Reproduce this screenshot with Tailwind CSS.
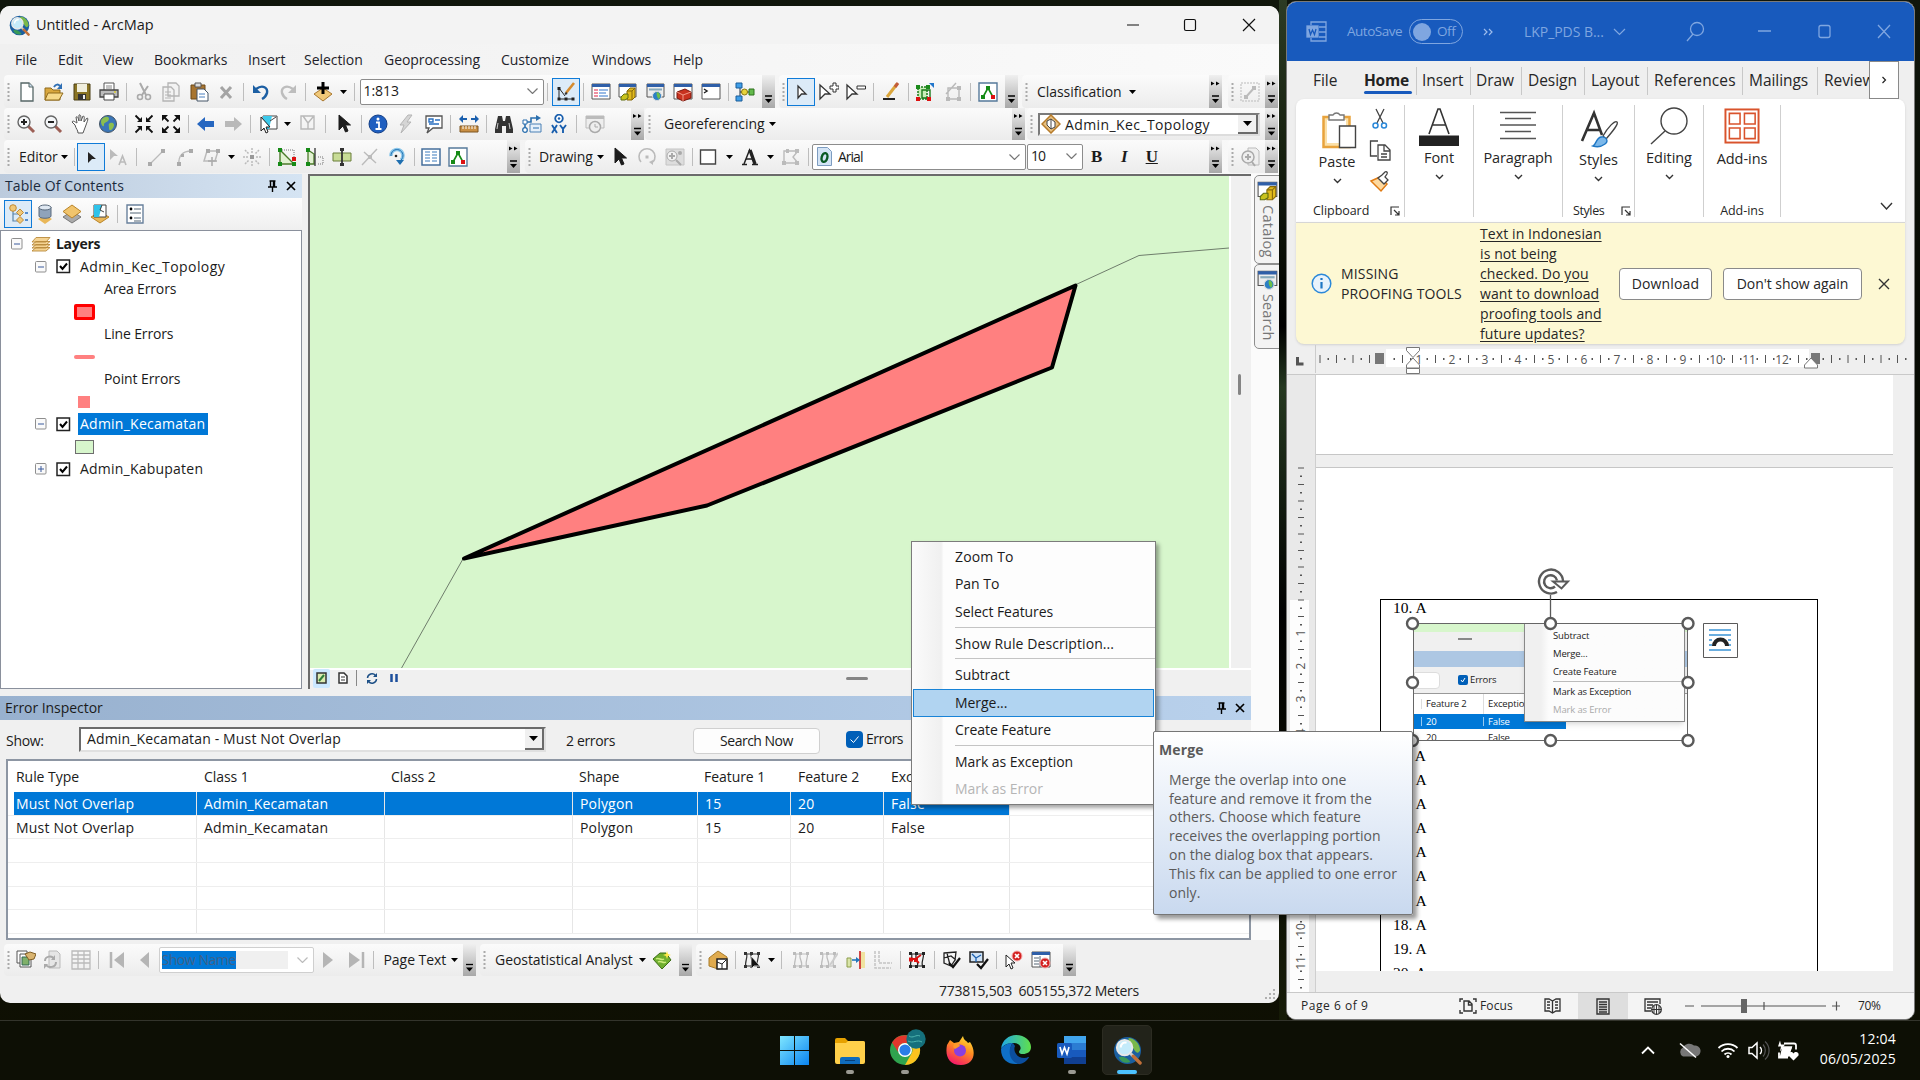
<!DOCTYPE html>
<html lang="en">
<head>
<meta charset="utf-8">
<title>Untitled - ArcMap</title>
<script src="https://cdn.jsdelivr.net/npm/@tailwindcss/browser@4"></script>
</head>
<body class="relative h-[1080px] w-[1920px] overflow-hidden bg-[#0c0f05] font-['Open_Sans','Noto_Sans',sans-serif] text-[14px] leading-none tracking-[-0.05px] text-[#1b1b1b]">

<!-- desktop wallpaper -->
<div class="absolute inset-0 bg-[linear-gradient(180deg,#10160c_0%,#070a03_30%,#0d0f04_60%,#0f1003_100%)]"></div>
<div class="absolute left-[1279px] top-0 h-[1020px] w-2 bg-[linear-gradient(180deg,#2c3b24,#16200f_15%,#000_32%,#253820_38%,#000_60%,#161b07)]"></div>

<!-- ArcMap window -->
<main class="absolute left-0 top-[6px] flex h-[997px] w-[1279px] flex-col overflow-hidden rounded-[10px] bg-[#f0f0f0]">
  <header class="flex h-[38px] shrink-0 items-center bg-[#f3f3f3] pl-[9px] pr-[3px]">
    <svg class="size-[21px]" viewBox="0 0 30 30"><use href="#arcglobe"/></svg>
    <span class="ml-[6px] grow text-[14.5px]">Untitled - ArcMap</span>
    <svg class="h-[16px] w-[150px]" viewBox="0 0 150 16" fill="none" stroke="#111" stroke-width="1.2"><path d="M1 8h12"/><rect x="58.500" y="2.500" width="11" height="11" rx="1.500"/><path d="M117 2l12 12M129 2l-12 12"/></svg>
  </header>
  <nav class="flex h-[31px] shrink-0 items-center bg-gradient-to-r from-[#f0f0f0] to-[#fafafa] pl-[15px] text-[#1e1e2a]">
    <span class="w-[43px]">File</span><span class="w-[45px]">Edit</span><span class="w-[51px]">View</span><span class="w-[94px]">Bookmarks</span><span class="w-[56px]">Insert</span><span class="w-[80px]">Selection</span><span class="w-[117px]">Geoprocessing</span><span class="w-[91px]">Customize</span><span class="w-[81px]">Windows</span><span>Help</span>
  </nav>
  <div class="flex h-[99px] shrink-0 flex-col bg-gradient-to-r from-[#f0f0f0] to-[#f8f8f8] pl-1">
    <div class="flex h-[33px]">
      <div data-tools=": new open save print | cut copy paste del | undo redo | add v | _2 #scale | _1.5 *edit | toc catalog search toolbox python | model ~ o" class="flex w-[771px] items-center rounded bg-gradient-to-b from-[#fbfbfb] to-[#ececec]"></div>
      <div data-tools=": _-1 *arrowo arrowp arrowm | pencil | topoext sketch | _1 topo ~ o" class="ml-1 flex w-[239px] items-center rounded bg-gradient-to-b from-[#fbfbfb] to-[#ececec]"></div>
      <div data-tools=": _6 t:Classification:88 v ~ O" class="ml-1 flex w-[200px] items-center rounded bg-gradient-to-b from-[#fbfbfb] to-[#ececec]"></div>
      <div data-tools=": _-1 linebox ~ O" class="ml-[6px] flex w-[50px] items-center rounded bg-gradient-to-b from-[#fbfbfb] to-[#ececec]"></div>
    </div>
    <div class="flex h-[32px]">
      <div data-tools=": _-1 zoomin zoomout pan globe | _1 fixin fixout | back fwd | _1 selfeat _-2 v clear | _1 arrow | info bolt popup | _1 measure | _1 binoc route xy | _1 time ~ O" class="flex w-[640px] items-center rounded bg-gradient-to-b from-[#fbfbfb] to-[#ececec]"></div>
      <div data-tools=": _10 t:Georeferencing:101 v ~ O" class="ml-px flex w-[380px] items-center rounded bg-gradient-to-b from-[#fbfbfb] to-[#ececec]"></div>
      <div data-tools=": _2 #topology ~ O" class="ml-[2px] flex w-[251px] items-center rounded bg-gradient-to-b from-[#fbfbfb] to-[#ececec]"></div>
    </div>
    <div class="flex h-[33px]">
      <div data-tools=": _6 t:Editor:38 v | _-1 *arrowd arrowa | _4 seg arc trace _-2 v point | _1 e1 e2 e3 split rotate | _-1 attr topo ~ O" class="flex w-[516px] items-center rounded bg-gradient-to-b from-[#fbfbfb] to-[#ececec]"></div>
      <div data-tools=": _5 t:Drawing:54 v _-1 arrow rot zoomel | _-1 rect v letter v nodes | #font #size b:B b:I b:U ~ O" class="ml-[5px] flex w-[697px] items-center rounded bg-gradient-to-b from-[#fbfbfb] to-[#ececec]"></div>
      <div data-tools=": _-1 pagezoom ~ O" class="ml-[6px] flex w-[50px] items-center rounded bg-gradient-to-b from-[#fbfbfb] to-[#ececec]"></div>
    </div>
  </div>

  <div class="flex h-[766px] shrink-0">
    <div class="flex w-[1251px] flex-col">
      <div class="flex h-[522px] shrink-0">
        <!-- table of contents -->
        <section class="flex w-[302px] flex-col">
          <div class="flex h-[24px] items-center bg-gradient-to-r from-[#bccbdd] to-[#d5e4f3] pl-[5px] pr-[2px]">
            <span class="grow tracking-[0.1px] text-[#1b2a3c]">Table Of Contents</span>
            <svg class="h-4 w-[36px]" viewBox="0 0 36 16"><use href="#pinx"/></svg>
          </div>
          <div data-tools="_4 *tocdraw _-1 tocsrc tocvis tocsel | _1 tocopt" class="flex h-[32px] items-center bg-gradient-to-b from-[#fdfdfd] to-[#efefef]"></div>
          <div class="flex h-[459px] flex-col border border-[#8a909c] bg-white pt-[2px]">
            <div class="flex h-[22.5px] items-center pl-[10px]"><svg class="size-3" viewBox="0 0 12 12"><use href="#minus"/></svg><svg class="ml-[7px] h-[17px] w-[22px]" viewBox="0 0 22 17"><path d="M2 15l4-3.500h14L16 15zM2 12l4-3.500h14L16 12zM2 9l4-3.500h14L16 9zM2 6l4-4.500h14L16 6z" fill="#f5d392" stroke="#b98a3c" stroke-width=".9"/></svg><b class="ml-[4px] text-[14px] tracking-[-0.3px]">Layers</b></div>
            <div class="flex h-[22.5px] items-center pl-[34px]"><svg class="size-3" viewBox="0 0 12 12"><use href="#minus"/></svg><svg class="ml-[9px] size-[15px]" viewBox="0 0 15 15"><use href="#check"/></svg><span class="ml-[9px] tracking-[0.42px]">Admin_Kec_Topology</span></div>
            <div class="flex h-[22.5px] items-center pl-[103px] tracking-[-0.15px]">Area Errors</div>
            <div class="flex h-[22.5px] items-center pl-[73px]"><i class="h-[16px] w-[21px] rounded-[2px] border-[3px] border-[#f00] bg-[#ff8080]"></i></div>
            <div class="flex h-[22.5px] items-center pl-[103px] tracking-[-0.15px]">Line Errors</div>
            <div class="flex h-[22.5px] items-center pl-[73px]"><i class="h-[4px] w-[21px] rounded bg-[#ff8080]"></i></div>
            <div class="flex h-[22.5px] items-center pl-[103px] tracking-[-0.1px]">Point Errors</div>
            <div class="flex h-[22.5px] items-center pl-[77px]"><i class="size-[12px] bg-[#ff8080]"></i></div>
            <div class="flex h-[22.5px] items-center pl-[34px]"><svg class="size-3" viewBox="0 0 12 12"><use href="#minus"/></svg><svg class="ml-[9px] size-[15px]" viewBox="0 0 15 15"><use href="#check"/></svg><span class="ml-[7px] flex h-[22px] w-[130px] items-center bg-[#0078d7] pl-[2px] tracking-[0.24px] text-white">Admin_Kecamatan</span></div>
            <div class="flex h-[22.5px] items-center pl-[74px]"><i class="h-[14px] w-[19px] border border-[#6e6e6e] bg-[#d7f6cc]"></i></div>
            <div class="flex h-[22.5px] items-center pl-[34px]"><svg class="size-3" viewBox="0 0 12 12"><use href="#plus"/></svg><svg class="ml-[9px] size-[15px]" viewBox="0 0 15 15"><use href="#check"/></svg><span class="ml-[9px] tracking-[0.22px]">Admin_Kabupaten</span></div>
          </div>
        </section>
        <!-- map view -->
        <section class="ml-[6px] h-[515px] w-[943px] border-l-2 border-t-2 border-[#6b6b6b]">
          <div class="flex h-[492px]">
            <svg class="h-[492px] w-[919px] bg-[#d7f6cc]" viewBox="310 176 919 492" fill="none">
              <path d="M463.500 558L401 669M1075 285l64-29.500L1229 248" stroke="#6f7d6c" stroke-width="1"/>
              <path d="M1075.500 285.500L1052 367.500L707 505.500L464 558.500Z" fill="#ff8080" stroke="#000" stroke-width="4" stroke-linejoin="round"/>
            </svg>
            <div class="flex w-[22px] border-l-2 border-white pl-[7px] pt-[198px]"><i class="h-[21px] w-[3px] rounded bg-[#858585]"></i></div>
          </div>
          <div class="flex h-[21px] items-center border-t-2 border-white pb-[3px] pl-[3px]">
            <svg class="h-[19px] w-[100px]" viewBox="0 0 100 19"><rect width="17" height="19" rx="2" fill="#cce8ff"/><rect x="4" y="4" width="9" height="10" fill="#dcebb0" stroke="#333" stroke-width="1.500"/><path d="M6 12l5-6" stroke="#2f7f3a" stroke-width="2"/><path d="M26 4h5l3 3v7h-8z" fill="#fff" stroke="#333" stroke-width="1.500"/><path d="M28 8h4M28 11h4" stroke="#333"/><path d="M43.500 1v16" stroke="#888"/><path d="M54.500 9a4.500 4.500 0 0 1 8-2.500M63.500 10a4.500 4.500 0 0 1-8 2.500" fill="none" stroke="#1c4f86" stroke-width="1.500"/><path d="M64 4v4h-4zM54 15v-4h4z" fill="#1c4f86"/><path d="M78.500 5v8M83.500 5v8" stroke="#1c4f9c" stroke-width="2.500"/></svg>
            <i class="ml-[433px] h-[3px] w-[22px] rounded bg-[#858585]"></i>
          </div>
        </section>
      </div>
      <!-- error inspector -->
      <section class="flex h-[244px] flex-col">
        <div class="flex h-[24px] shrink-0 items-center bg-gradient-to-r from-[#98b1cf] to-[#b9d1ec] pl-[5px] pr-[2px]">
          <span class="grow">Error Inspector</span>
          <svg class="h-4 w-[36px]" viewBox="0 0 36 16"><use href="#pinx"/></svg>
        </div>
        <div class="flex h-[39px] shrink-0 items-center pl-[6px] pt-[3px]">
          <span class="w-[73px] tracking-[-0.3px]">Show:</span>
          <span class="-mt-[4px] flex h-[25px] w-[467px] items-center border-2 border-[#6b6b6b] border-b-[#e0e0e0] border-r-[#e0e0e0] bg-white pl-[6px]"><span class="grow tracking-[0.15px]">Admin_Kecamatan - Must Not Overlap</span><span class="flex h-full w-[19px] items-center justify-center border-b-2 border-r-2 border-[#6b6b6b] bg-[#f0f0f0]"><svg class="h-[5px] w-[9px]" viewBox="0 0 9 5"><path d="M0 0h9L4.500 5z"/></svg></span></span>
          <span class="ml-[20px] w-[127px] tracking-[-0.35px]">2 errors</span>
          <span class="flex h-[26px] w-[127px] items-center justify-center rounded border border-[#d0d0d0] bg-[#fdfdfd] tracking-[-0.5px]">Search Now</span>
          <svg class="-mt-[4px] ml-[26px] size-[17px]" viewBox="0 0 17 17"><rect width="17" height="17" rx="4" fill="#005fb8"/><path d="M4.500 8.500l3 3 5-6" fill="none" stroke="#fff"/></svg>
          <span class="-mt-[4px] ml-[3px] tracking-[-0.5px]">Errors</span>
        </div>
        <div class="ml-[6px] h-[181px] w-[1245px] shrink-0 overflow-hidden border-2 border-[#8d96a3] bg-white">
          <div class="flex h-[31px] items-center pl-[8px]">
            <span class="w-[188px]">Rule Type</span><span class="w-[187px]">Class 1</span><span class="w-[188px]">Class 2</span><span class="w-[125px]">Shape</span><span class="w-[94px]">Feature 1</span><span class="w-[93px]">Feature 2</span><span>Exception</span>
          </div>
          <div id="rows" class="tracking-[0.18px]"></div>
        </div>
      </section>
    </div>
    <!-- docked tabs -->
    <aside class="flex w-[28px] flex-col bg-[#fbfbfb] pl-[3px] pt-[1px]">
      <div class="flex h-[89px] w-[27px] flex-col items-center rounded-l-[5px] border border-[#8e8e8e] bg-[#f3f3f3] pt-[4px]"><svg class="size-[22px]" viewBox="0 0 20 20"><use href="#catalog"/></svg><span class="mt-[3px] text-[14.5px] tracking-[0.3px] text-[#777] [writing-mode:vertical-rl]">Catalog</span></div>
      <div class="flex h-[85px] w-[27px] flex-col items-center rounded-l-[5px] border border-[#8e8e8e] bg-[#f3f3f3] pt-[4px]"><svg class="size-[22px]" viewBox="0 0 20 20"><use href="#search"/></svg><span class="mt-[3px] text-[14.5px] tracking-[0.1px] text-[#777] [writing-mode:vertical-rl]">Search</span></div>
    </aside>
  </div>
  <div class="flex h-[38px] shrink-0 items-center pl-1 pt-[2px]">
    <div data-tools=": _-1 ddp refresh grid | _2 first prev #showname _1 next last | _7 t:Page_Text:64 v ~ o" class="flex h-[32px] w-[472px] items-center rounded bg-gradient-to-b from-[#fbfbfb] to-[#ececec]"></div>
    <div data-tools=": _6 t:Geostatistical_Analyst:140 v _-1 geo ~ o" class="ml-[4px] flex h-[32px] w-[212px] items-center rounded bg-gradient-to-b from-[#fbfbfb] to-[#ececec]"></div>
    <div data-tools=": _-1 valid | seltopo _-2 v | _2 n1 n2 align n3 | _-1 fix | val1 val2 | errsel errwin ~ o" class="ml-[4px] flex h-[32px] w-[380px] items-center rounded bg-gradient-to-b from-[#fbfbfb] to-[#ececec]"></div>
  </div>
  <footer class="flex h-[25px] items-center pl-[939px] text-[#222]"><span class="w-[320px] whitespace-pre tracking-[-0.28px]">773815,503  605155,372 Meters</span><svg class="mt-[7px] ml-[4px] size-[15px]" viewBox="0 0 15 15" fill="#b0b0b0"><path d="M10 2h2v2h-2zM10 6h2v2h-2zM10 10h2v2h-2zM6 6h2v2H6zM6 10h2v2H6zM2 10h2v2H2z"/></svg></footer>
</main>

<!-- Word window -->
<article class="absolute left-[1286px] top-[1px] flex h-[1019px] w-[629px] flex-col overflow-hidden rounded-[10px] border border-[#7a7a7a] bg-[#efefef] text-[#262626]">
  <header class="flex h-[59px] shrink-0 items-center bg-[#185abd] pl-[19px] text-[#7fa6e0]">
    <svg class="size-[21px]" viewBox="0 0 21 21" fill="none" stroke="#7fa6e0" stroke-width="1.300"><path d="M5 4V1h15v19H5v-3M13 6h7M13 11h7M13 16h7"/><rect x="1" y="5" width="11" height="11" fill="#7fa6e0"/><path d="M3 8l1.500 5.500L6.500 9l2 4.500L10 8" stroke="#185abd"/></svg>
    <span class="ml-[20px] w-[62px] text-[13.5px] tracking-[-0.5px]">AutoSave</span>
    <span class="flex h-[25px] w-[54px] items-center rounded-full border border-[#7fa6e0] pl-[3px]"><i class="size-[18px] rounded-full bg-[#7fa6e0]"></i><span class="ml-[6px] text-[13.5px] tracking-[-0.4px]">Off</span></span>
    <svg class="ml-[20px] size-[10px]" viewBox="0 0 10 10" fill="none" stroke="#9dbcec" stroke-width="1.200"><path d="M1 2l3 3-3 3M6 2l3 3-3 3"/></svg>
    <span class="ml-[31px] w-[89px]">LKP_PDS B...</span>
    <svg class="h-[8px] w-[13px]" viewBox="0 0 13 8" fill="none" stroke="#7fa6e0" stroke-width="1.200"><path d="M1 1l5.500 5.500L12 1"/></svg>
    <svg class="ml-[60px] h-[22px] w-[206px]" viewBox="0 0 206 22" fill="none" stroke="#7fa6e0" stroke-width="1.300"><circle cx="11" cy="8" r="6.500"/><path d="M7 13l-6 7M72 10h13"/><rect x="133" y="4.500" width="11" height="12" rx="2"/><path d="M192 4l12 13M204 4l-12 13"/></svg>
  </header>
  <nav class="flex h-[38px] shrink-0 items-center pl-[26px] pt-[2px] text-[15.5px] tracking-[-0.05px]">
    <span class="w-[51px]">File</span>
    <span class="relative w-[52px] font-bold tracking-[-0.25px] text-[#222]">Home<i class="absolute left-0 top-[18px] h-[3px] w-[48px] rounded bg-[#185abd]"></i></span>
    <span class="flex h-[28px] w-[54px] items-center border-l border-[#c8c8c8] pl-[5px]">Insert</span>
    <span class="flex h-[28px] w-[51px] items-center border-l border-[#c8c8c8] pl-[5px]">Draw</span>
    <span class="flex h-[28px] w-[63px] items-center border-l border-[#c8c8c8] pl-[6px]">Design</span>
    <span class="flex h-[28px] w-[63px] items-center border-l border-[#c8c8c8] pl-[6px]">Layout</span>
    <span class="flex h-[28px] w-[95px] items-center border-l border-[#c8c8c8] pl-[6px] tracking-[0.15px]">References</span>
    <span class="flex h-[28px] w-[75px] items-center border-l border-[#c8c8c8] pl-[6px]">Mailings</span>
    <span class="flex h-[28px] w-[52px] items-center overflow-hidden border-l border-[#c8c8c8] pl-[6px]">Review</span>
    <span class="-mt-[2px] flex h-[38px] w-[30px] items-center justify-center border border-[#8a8a8a] bg-white"><svg class="size-[8px]" viewBox="0 0 8 8" fill="none" stroke="#222" stroke-width="1.200"><path d="M2.500 1l3 3-3 3"/></svg></span>
  </nav>
  <div class="mx-[9px] flex h-[123px] shrink-0 rounded-t-[8px] bg-white pt-[6px] text-[14.5px] tracking-[-0.05px] shadow-sm">
    <div class="flex h-[112px] w-[109px] flex-col border-r border-[#cfcfcf]">
      <div class="flex h-[92px]">
        <div class="flex w-[68px] flex-col items-center pl-[14px] pt-[5px]"><svg class="ml-[5px] h-[39px] w-[35px]" viewBox="0 0 35 39"><path d="M1.500 7h26v30h-26z" fill="#fbe0a8" stroke="#e8a33d" stroke-width="2.500"/><path d="M5 10h19v23H5z" fill="#fff"/><path d="M7 10V5h4a4 4 0 0 1 7 0h4v5z" fill="#fff" stroke="#777" stroke-width="1.400"/><path d="M17.500 16h16v21.500h-16z" fill="#fff" stroke="#444" stroke-width="1.400"/></svg><span class="mt-[6px]">Paste</span><svg class="mt-[8px] h-[6px] w-[9px]" viewBox="0 0 9 6"><use href="#chev"/></svg></div>
        <svg class="ml-[5px] mt-[3px] h-[86px] w-[22px]" viewBox="0 0 22 86" fill="none"><path d="M7 1l7 14M15 1L8 15" stroke="#444" stroke-width="1.300"/><circle cx="6.500" cy="17.500" r="2.500" stroke="#2b88d8" stroke-width="1.500"/><circle cx="15" cy="17.500" r="2.500" stroke="#2b88d8" stroke-width="1.500"/><path d="M8 48H1.500V33H9M9 37h7l5 5v10H9zM15 37v6h6M12 46h6M12 49h6" stroke="#444" stroke-width="1.300"/><path d="M2 73l9-4 7 7-6 7z" fill="#fdd9a0" stroke="#e07b14" stroke-width="1.500"/><path d="M9 70l4-3 3-3c1-1 3 0 2 2l-2 3 3 3-4 4z" fill="#fff" stroke="#444" stroke-width="1.300"/></svg>
      </div>
      <div class="flex items-center pl-[17px] pt-[8px] text-[12.5px]"><span class="w-[77px]">Clipboard</span><svg class="size-[10px]" viewBox="0 0 10 10"><use href="#launch"/></svg></div>
    </div>
    <div class="flex h-[112px] w-[69px] flex-col items-center border-r border-[#cfcfcf] pt-[2px]"><svg class="h-[40px] w-[40px]" viewBox="0 0 40 40"><path d="M10 27L19 2h2l9 25M13.500 18h13" fill="none" stroke="#333" stroke-width="1.600"/><path d="M0 28.500h40V39H0z" fill="#222"/></svg><span class="mt-[4px]">Font</span><svg class="mt-[8px] h-[6px] w-[9px]" viewBox="0 0 9 6"><use href="#chev"/></svg></div>
    <div class="flex h-[112px] w-[89px] flex-col items-center border-r border-[#cfcfcf] pt-[2px]"><svg class="h-[40px] w-[36px]" viewBox="0 0 36 40"><path d="M0 5.500h36M5 11.500h26M0 18h36M5 24.500h26M0 31.500h36" stroke="#555" stroke-width="1.300"/></svg><span class="mt-[4px] tracking-[-0.15px]">Paragraph</span><svg class="mt-[8px] h-[6px] w-[9px]" viewBox="0 0 9 6"><use href="#chev"/></svg></div>
    <div class="flex h-[112px] w-[72px] flex-col items-center border-r border-[#cfcfcf] pt-[4px]"><svg class="ml-[3px] h-[40px] w-[40px]" viewBox="0 0 40 40" fill="none"><path d="M2 32L14 4l8 22M7 21h13" stroke="#333" stroke-width="2.600"/><path d="M23 27c5-9 12-16 14-14s-5 10-11 17z" fill="#fff" stroke="#444" stroke-width="1.400"/><path d="M13 37c3-1 3-8 8-9s8 4 4 7-9 3-12 2z" fill="#7cb8ea" stroke="#1f77c4" stroke-width="1.400"/></svg><span class="mt-[4px]">Styles</span><svg class="mt-[8px] h-[6px] w-[9px]" viewBox="0 0 9 6"><use href="#chev"/></svg><div class="mt-[23px] flex w-full items-center pl-[10px] text-[12.5px] tracking-[-0.4px]"><span class="w-[47px]">Styles</span><svg class="ml-[1px] size-[10px]" viewBox="0 0 10 10"><use href="#launch"/></svg></div></div>
    <div class="flex h-[112px] w-[69px] flex-col items-center border-r border-[#cfcfcf] pt-[1px]"><svg class="h-[40px] w-[38px]" viewBox="0 0 38 40" fill="none" stroke="#444" stroke-width="1.400"><circle cx="24" cy="15" r="13"/><path d="M15 25L1 38"/></svg><span class="mt-[5px]">Editing</span><svg class="mt-[8px] h-[6px] w-[9px]" viewBox="0 0 9 6"><use href="#chev"/></svg></div>
    <div class="flex h-[112px] w-[77px] flex-col items-center border-r border-[#cfcfcf] pt-[3px]"><svg class="h-[37px] w-[36px]" viewBox="0 0 36 37" fill="none" stroke="#d9532c"><rect x="1" y="1.500" width="34" height="34" stroke-width="2"/><path d="M5 5.500h11v11H5zM20.500 5.500h11v11h-11zM5 20.500h11v11H5zM20.500 20.500h11v11h-11z" stroke-width="1.600"/></svg><span class="mt-[8px]">Add-ins</span><span class="mt-[38px] text-[12.5px]">Add-ins</span></div>
    <svg class="ml-[99px] mt-[97px] h-[8px] w-[13px]" viewBox="0 0 13 8" fill="none" stroke="#333" stroke-width="1.400"><path d="M1 1l5.500 6L12 1"/></svg>
  </div>
  <div class="mx-[9px] flex h-[122px] shrink-0 items-center rounded-b-[8px] border-t border-[#d6d6d6] bg-[#fdf8d3] pl-[15px] shadow">
    <svg class="size-[21px]" viewBox="0 0 21 21"><circle cx="10.500" cy="10.500" r="9.300" fill="#e8f3fc" stroke="#2b88d8" stroke-width="1.500"/><path d="M10.500 9v6.500M10.500 5v2" stroke="#1f77c4" stroke-width="2.200"/></svg>
    <p class="ml-[9px] w-[139px] text-[14px] leading-[20px] tracking-[0.15px]">MISSING<br>PROOFING TOOLS</p>
    <p class="w-[139px] text-[14px] leading-[20px] tracking-[0.1px] underline underline-offset-2">Text in Indonesian<br>is not being<br>checked. Do you<br>want to download<br>proofing tools and<br>future updates?</p>
    <span class="flex h-[32px] w-[93px] items-center justify-center rounded-[4px] border border-[#8a8a8a] bg-white tracking-[0.15px]">Download</span>
    <span class="ml-[11px] flex h-[32px] w-[139px] items-center justify-center rounded-[4px] border border-[#8a8a8a] bg-white">Don't show again</span>
    <svg class="ml-[16px] size-[12px]" viewBox="0 0 12 12" stroke="#333" stroke-width="1.400"><path d="M1 1l10 10M11 1L1 11"/></svg>
  </div>
  <svg id="hruler" class="h-[31px] w-[627px] shrink-0 border-b border-[#c9c9c9]" viewBox="1287 344 627 30"></svg>
  <div class="flex h-[617px] shrink-0">
    <svg id="vruler" class="h-[617px] w-[29px] shrink-0 border-r border-[#cfcfcf] bg-[#e9e9e9]" viewBox="1287 375 28 617"></svg>
    <div class="h-[596px] w-[577px] overflow-hidden">
      <div class="h-[80px] border-b border-[#c6c6c6] bg-white"></div>
      <div class="mt-[12px] h-[504px] border-t border-[#c6c6c6] bg-white pl-[64px] pt-[131px]">
        <div class="relative h-[400px] w-[438px] border border-black pl-[12px] font-['Liberation_Serif',serif] text-[15.5px] tracking-normal text-black">
          <p class="h-[145px]">10. A</p>
          <div id="list"></div>
          <!-- inline picture with selection handles -->
          <div class="absolute left-[32px] top-[23px] h-[118px] w-[275px] border border-[#666] bg-white font-['Open_Sans',sans-serif] text-[9.5px] tracking-[-0.15px] text-[#222]">
            <div class="flex h-[116px] flex-col overflow-hidden">
              <div class="h-[8px] shrink-0 bg-[#d7f6cc]"></div>
              <div class="h-[19px] shrink-0 bg-[#f0f0f0] pl-[44px] pt-[6px]"><i class="block h-[2px] w-[14px] bg-[#888]"></i></div>
              <div class="h-[16px] shrink-0 bg-[#adc7e3]"></div>
              <div class="flex h-[27px] shrink-0 items-center border-b border-[#999] bg-[#f0f0f0]"><i class="h-[17px] w-[26px] rounded-r border border-[#ddd] bg-white"></i><i class="ml-[18px] flex size-[10px] items-center justify-center rounded-[2px] bg-[#005fb8]"><svg class="size-[6px]" viewBox="0 0 6 6" fill="none" stroke="#fff"><path d="M1 3l1.500 2L5 1"/></svg></i><span class="ml-[2px]">Errors</span></div>
              <div class="flex h-[20px] shrink-0 items-center"><span class="ml-[7px] w-[62px] border-l border-[#ddd] pl-[4px]">Feature 2</span><span class="h-full border-l border-[#ddd] pl-[4px] pt-[5px]">Exception</span></div>
              <div class="flex h-[15px] w-[152px] shrink-0 items-center bg-[#0078d7] text-white"><span class="ml-[7px] w-[62px] border-l border-white/60 pl-[4px]">20</span><span class="border-l border-white/60 pl-[4px]">False</span></div>
              <div class="flex h-[15px] shrink-0 items-center pt-[3px]"><span class="ml-[7px] w-[62px] pl-[5px]">20</span><span class="pl-[5px]">False</span></div>
            </div>
            <div class="absolute left-[110px] top-0 flex h-[98px] w-[161px] flex-col border border-t-0 border-[#888] bg-gradient-to-r from-[#f0f0f0] from-10% to-[#fcfcfc] to-15% pl-[28px] pt-[7px] shadow-md">
              <span class="h-[18px]">Subtract</span><span class="h-[18px]">Merge...</span><span class="h-[14px]">Create Feature</span><i class="h-[6px] border-t border-[#bbb]"></i><span class="h-[18px]">Mark as Exception</span><span class="text-[#aaa]">Mark as Error</span>
            </div>
          </div>
          <svg class="absolute left-[19px] top-[-36px] h-[190px] w-[350px]" viewBox="0 0 350 190" fill="none" stroke="#5a5a5a" stroke-width="2.400"><path d="M150.500 31v28" stroke-width="1.300"/><g fill="#fff"><circle cx="12.500" cy="59.500" r="5.500"/><circle cx="150.500" cy="59.500" r="5.500"/><circle cx="288" cy="59.500" r="5.500"/><circle cx="12.500" cy="118.500" r="5.500"/><circle cx="288" cy="118.500" r="5.500"/><circle cx="12.500" cy="176.500" r="5.500"/><circle cx="150.500" cy="176.500" r="5.500"/><circle cx="288" cy="176.500" r="5.500"/></g><path d="M157 28a12 12 0 1 1 6-11M155 22.500a6.500 6.500 0 1 1 2-6" stroke="#5a5a5a"/><path d="M153 17.500h15l-6.500 7z" fill="#fff" stroke-width="2"/><path d="M303.500 59.500h34v34h-34z" fill="#fff" stroke-width="1"/><path d="M309 66h22M309 71h22M309 76h3M309 81h3M328 76h3M328 81h3M309 86h22" stroke="#3a94d6" stroke-width="1.700"/><path d="M314 82a6.500 6.500 0 0 1 13 0" stroke="#222" stroke-width="4"/></svg>
        </div>
      </div>
    </div>
  </div>
  <footer class="flex h-[27px] shrink-0 items-center border-t border-[#c9c9c9] bg-[#f4f4f4] pl-[14px] text-[12px]">
    <span class="w-[158px] tracking-[0.55px]">Page 6 of 9</span>
    <svg class="h-[16px] w-[18px]" viewBox="0 0 18 16" fill="none" stroke="#333" stroke-width="1.400"><path d="M4 1H1v3M14 1h3v3M4 15H1v-3M14 15h3v-3M5 3h5l3 3v7H5zM9.500 3v4H13"/></svg>
    <span class="ml-[3px] w-[64px] tracking-[0.15px]">Focus</span>
    <svg class="h-[16px] w-[17px]" viewBox="0 0 17 16" fill="none" stroke="#333" stroke-width="1.300"><path d="M8.500 3v12M8.500 3L5 1H1v12h4l3.500 2 3.500-2h4V1h-4zM3 4h3M3 7h3M3 10h3M11 4h3M11 7h3M11 10h3"/></svg>
    <span class="ml-[17px] flex h-[26px] w-[50px] items-center justify-center bg-[#dedede]"><svg class="h-[17px] w-[14px]" viewBox="0 0 14 17" fill="none" stroke="#333" stroke-width="1.400"><path d="M1 1h12v15H1zM3 4h8M3 6.500h8M3 9h8M3 11.500h8M3 14h8"/></svg></span>
    <svg class="ml-[16px] h-[17px] w-[18px]" viewBox="0 0 18 17" fill="none" stroke="#333" stroke-width="1.300"><path d="M7 13H1V1h15v5M3 4h11M3 7h6M3 10h4"/><circle cx="12.500" cy="11.500" r="4.800"/><path d="M8 11.500h9M12.500 7v9M10 8v7M15 8v7" stroke-width="1"/></svg>
    <svg class="ml-[22px] h-[18px] w-[156px]" viewBox="0 0 156 18" stroke="#555" stroke-width="1.200"><path d="M1 9h9M17 9h125M148 9h9M152.500 4.500v9M80 5v8"/><path d="M57 2h6v14h-6z" fill="#666" stroke="none"/></svg>
    <span class="ml-[18px] tracking-[-0.3px]">70%</span>
  </footer>
</article>

<!-- context menu -->
<div class="absolute left-[911px] top-[541px] flex h-[264px] w-[245px] flex-col border border-[#7c7c7c] bg-gradient-to-r from-[#fbfbfb] via-[#f0f0f0] via-12% to-[#fdfdfd] to-13% py-[1px] shadow-[3px_3px_4px_rgba(0,0,0,.35)]">
  <span class="flex h-[27.500px] items-center pl-[43px] tracking-[0.15px]">Zoom To</span>
  <span class="flex h-[27.500px] items-center pl-[43px]">Pan To</span>
  <span class="flex h-[28px] items-center pl-[43px]">Select Features</span>
  <i class="ml-[43px] mt-[1px] h-[3px] border-t border-[#c4c4c4]"></i>
  <span class="flex h-[27.500px] items-center pl-[43px] tracking-[0.08px]">Show Rule Description...</span>
  <i class="ml-[43px] mt-[1px] h-[3px] border-t border-[#c4c4c4]"></i>
  <span class="flex h-[27.500px] items-center pl-[43px]">Subtract</span>
  <span class="mx-[1px] flex h-[28px] items-center border border-[#1883d7] bg-[#b1d4f1] pl-[41px]">Merge...</span>
  <span class="flex h-[27.500px] items-center pl-[43px]">Create Feature</span>
  <i class="ml-[43px] mt-[1px] h-[3px] border-t border-[#c4c4c4]"></i>
  <span class="flex h-[27.500px] items-center pl-[43px]">Mark as Exception</span>
  <span class="flex h-[27.500px] items-center pl-[43px] text-[#b5b5b5]">Mark as Error</span>
</div>
<!-- tooltip -->
<div class="absolute left-[1153px] top-[731px] h-[184px] w-[260px] rounded-[2px] border border-[#767676] bg-gradient-to-b from-white to-[#c9d9ef] pl-[5px] pt-[9px] leading-[18.800px] text-[#5a5a5a] shadow-[4px_4px_4px_rgba(0,0,0,.4)]">
  <b class="tracking-[0.1px]">Merge</b>
  <p class="whitespace-nowrap pl-[10px] pt-[11px] tracking-[0.02px]">Merge the overlap into one<br>feature and remove it from the<br>others. Choose which feature<br>receives the overlapping portion<br>on the dialog box that appears.<br>This fix can be applied to one error<br>only.</p>
</div>

<!-- taskbar -->
<div class="absolute left-0 top-[1020px] flex h-[60px] w-full items-center border-t border-[#33342c] bg-[#0d0f05] text-white">
  <div class="ml-[769px] flex h-full w-[383px] items-center justify-between pb-px">
    <span class="flex h-[50px] w-[50px] items-center justify-center"><svg class="size-[29px]" viewBox="0 0 29 29"><defs><linearGradient id="gw" x2="1" y2="1"><stop stop-color="#7fe6ff"/><stop offset="1" stop-color="#0a84f0"/></linearGradient></defs><path d="M0 0h14v14H0zM15 0h14v14H15zM0 15h14v14H0zM15 15h14v14H15z" fill="url(#gw)"/></svg></span>
    <span class="relative flex h-[50px] w-[50px] items-center justify-center"><svg class="h-[28px] w-[30px]" viewBox="0 0 30 28"><path d="M0 4a2 2 0 0 1 2-2h8l3 3h15a2 2 0 0 1 2 2v6H0z" fill="#e6a100"/><path d="M0 7h11l2-2h15a2 2 0 0 1 2 2v19a2 2 0 0 1-2 2H2a2 2 0 0 1-2-2z" fill="#ffd04a"/><path d="M5 28v-5a2 2 0 0 1 2-2h16a2 2 0 0 1 2 2v5z" fill="#0f6cbd"/><path d="M10 24.500h10" stroke="#083f78"/></svg><i class="absolute bottom-[1px] left-[21px] h-[4px] w-[8px] rounded bg-[#9a9a93]"></i></span>
    <span class="relative flex h-[50px] w-[50px] items-center justify-center"><svg class="-mt-[6px] ml-[6px] h-[36px] w-[36px]" viewBox="0 0 36 36"><g transform="translate(0 6)"><circle cx="15" cy="15" r="15" fill="#2fa34e"/><path d="M2 7.500A15 15 0 0 1 28 8H15a7 7 0 0 0-6.500 9.500z" fill="#e2372c"/><path d="M28 7.500A15 15 0 0 1 15 30l6.500-11.500A7 7 0 0 0 15 8z" fill="#fcc31e"/><circle cx="15" cy="15" r="7" fill="#fff"/><circle cx="15" cy="15" r="5.600" fill="#2a7de8"/></g><circle cx="26" cy="10" r="9.700" fill="#15707c"/><path d="M19 7c4 3 7-2 11 0M18 12c5 3 9-2 14 1" stroke="#4fb6b0" fill="none"/></svg><i class="absolute bottom-[1px] left-[21px] h-[4px] w-[8px] rounded bg-[#9a9a93]"></i></span>
    <span class="flex h-[50px] w-[50px] items-center justify-center"><svg class="size-[29px]" viewBox="0 0 29 29"><defs><linearGradient id="gf" x1=".8" x2=".3" y2="1"><stop stop-color="#ffe436"/><stop offset=".45" stop-color="#ff8a22"/><stop offset="1" stop-color="#f5156c"/></linearGradient></defs><path d="M1 9l3-5 4 3 5-1 4-6c1 5 3 4 5 7l2-1c7 10 4 23-9 23S-1 19 1 9z" fill="url(#gf)"/><circle cx="14" cy="14.500" r="6" fill="#8a3fe0"/><path d="M8 8c3-1 5 0 6 2l-5 3c-2-1-2-3-1-5z" fill="#ff9a2a"/></svg></span>
    <span class="flex h-[50px] w-[50px] items-center justify-center"><svg class="size-[30px]" viewBox="0 0 30 30"><defs><linearGradient id="ge" x2="1"><stop stop-color="#1fa8e8"/><stop offset="1" stop-color="#60e04a"/></linearGradient></defs><path d="M0 14C1 5 8 0 15 0c9 0 15 6 15 12 0 5-4 7-8 7s-5-2-3-4c2-3-1-7-6-7C7 8 2 10 0 14z" fill="url(#ge)"/><path d="M0 14c3-5 8-6 12-6-4 3-4 14 8 16 3 0 6-1 8-2-6 10-28 11-28-8z" fill="#0f6fc6"/><path d="M12 8c-6 6-4 19 6 21 4 0 8-3 10-7-9 4-17-4-14-11z" fill="#0b4e9e"/></svg></span>
    <span class="relative flex h-[50px] w-[50px] items-center justify-center"><svg class="h-[28px] w-[29px]" viewBox="0 0 29 28"><path d="M7 0h22v7H7z" fill="#41a5ee"/><path d="M7 7h22v7H7z" fill="#2b7cd3"/><path d="M7 14h22v7H7z" fill="#185abd"/><path d="M7 21h22v7H7z" fill="#103f91"/><rect y="7" width="15" height="15" rx="1.500" fill="#185abd"/><path d="M3 11l2 7 2.500-6.500L10 18l2-7" fill="none" stroke="#fff" stroke-width="1.600"/></svg><i class="absolute bottom-[1px] left-[21px] h-[4px] w-[8px] rounded bg-[#9a9a93]"></i></span>
    <span class="relative flex h-[50px] w-[50px] items-center justify-center rounded-[5px] border border-[#2c2c22] bg-[#22231a]"><svg class="size-[29px]" viewBox="0 0 30 30"><g id="arcglobe"><circle cx="15" cy="15" r="14" fill="#1a5fa0"/><path d="M16 2c6 0 12 6 12 13-3 5-5 1-7-2s-5-5-5-11z" fill="#79b84a"/><path d="M6 22c4-2 10 1 12 5-5 2-10 0-12-5z" fill="#3a9a58"/><circle cx="12" cy="12" r="8" fill="#c4ebfa" stroke="#e8e8e8" stroke-width="2"/><path d="M8 12c0-4 3-6 6-5" stroke="#fff" stroke-width="2" fill="none"/><path d="M18 18l3 3" stroke="#ccc" stroke-width="3"/><path d="M21 21l7 7" stroke="#c0703a" stroke-width="3.500" stroke-linecap="round"/></g></svg><i class="absolute bottom-0 left-[14px] h-[4px] w-[20px] rounded bg-[#4cc2ff]"></i></span>
  </div>
  <svg class="ml-[488px] h-[24px] w-[160px]" viewBox="1640 1038.500 160 24" fill="none" stroke="#fff" stroke-width="1.800"><path d="M1642 1053l6-6 6 6"/><path d="M1683 1056a5 5 0 0 1 0-9 7 7 0 0 1 11-2 5.500 5.500 0 0 1 2 11z" fill="#777" stroke="none"/><path d="M1680 1043l16 14" stroke-width="1.500"/><path d="M1718.500 1047.500a13.500 13.500 0 0 1 19 0M1721.500 1051a9 9 0 0 1 13 0M1724.500 1054a5 5 0 0 1 7 0"/><circle cx="1728" cy="1056" r="1.500" fill="#fff" stroke="none"/><path d="M1749 1047h3l5-4.500v15l-5-4.500h-3zM1760 1046.500a5 5 0 0 1 0 7" stroke-width="1.500"/><path d="M1763 1044a9 9 0 0 1 0 12M1765 1041a12 12 0 0 1 0 18" stroke="#555" stroke-width="1.200"/><path d="M1784 1043h10a2 2 0 0 1 2 2v4M1779 1052v5h9M1783 1047h8l-3 8h-7z"/><path d="M1784 1047h7l-3 8h-6z" fill="#fff"/><path d="M1780 1040l-2 6h3l-1 5 5-7h-4z" fill="#fff" stroke="none"/><path d="M1793.500 1060l-5-5c-1-3 3-5 5-2 2-3 6-1 5 2z" fill="#fff" stroke="none"/></svg>
  <div class="ml-[5px] w-[91px] whitespace-nowrap pb-[3px] text-right leading-[20px] tracking-[0.2px]">12:04<br>06/05/2025</div>
</div>

<!-- combo boxes used inside toolbars -->
<template id="scale"><span class="flex h-[26px] w-[184px] shrink-0 items-center rounded-[2px] border border-[#8c8c8c] bg-white pb-[2px] pl-[3px] pr-[5px]"><span class="grow">1:813</span><svg class="h-[6px] w-[11px]" viewBox="0 0 11 6" fill="none" stroke="#777" stroke-width="1.200"><path d="M.5.500l5 5 5-5"/></svg></span></template>
<template id="topology"><span class="flex h-[23px] w-[222px] shrink-0 items-center border-2 border-[#7a7a7a] border-b-[#ddd] border-r-[#ddd] bg-white pl-[1px]"><svg class="size-[20px]" viewBox="0 0 20 20"><path d="M10 1l9 9-9 9-9-9z" fill="#e8c080" stroke="#b67b2a" stroke-width="1.500"/><path d="M6 7l4-2 4 3v5l-4 2-4-4z M10 5v10" fill="#fff" stroke="#444"/></svg><span class="ml-[4px] grow pt-[2px] tracking-[0.4px]">Admin_Kec_Topology</span><span class="flex h-full w-[20px] items-center justify-center border-b-2 border-r-2 border-[#6b6b6b] bg-[#f0f0f0]"><svg class="h-[5px] w-[9px]" viewBox="0 0 9 5"><path d="M0 0h9L4.500 5z"/></svg></span></span></template>
<template id="font"><span class="flex h-[26px] w-[214px] shrink-0 items-center rounded-[2px] border border-[#8c8c8c] bg-white pl-[4px] pr-[5px]"><svg class="h-[19px] w-[15px]" viewBox="0 0 15 19"><path d="M.5.500h10l4 4v14H.500z" fill="#d4e4f5" stroke="#7d9cc0"/><ellipse cx="7.500" cy="10.500" rx="2.800" ry="4.500" fill="none" stroke="#0b5a24" stroke-width="2.400" transform="rotate(15 7.500 10.500)"/></svg><span class="ml-[6px] grow tracking-[-1px]">Arial</span><svg class="h-[6px] w-[11px]" viewBox="0 0 11 6" fill="none" stroke="#777" stroke-width="1.200"><path d="M.5.500l5 5 5-5"/></svg></span></template>
<template id="size"><span class="ml-[1px] flex h-[26px] w-[56px] shrink-0 items-center rounded-[2px] border border-[#8c8c8c] bg-white pb-[2px] pl-[3px] pr-[5px]"><span class="grow tracking-[-0.9px]">10</span><svg class="h-[6px] w-[11px]" viewBox="0 0 11 6" fill="none" stroke="#777" stroke-width="1.200"><path d="M.5.500l5 5 5-5"/></svg></span></template>
<template id="showname"><span class="flex h-[26px] w-[155px] shrink-0 items-center rounded-[2px] border border-[#cfcfcf] bg-white pl-[2px] pr-[5px]"><span class="flex h-[18px] grow items-center bg-[#f0f0f0]"><span class="flex h-[18px] w-[74px] items-center whitespace-nowrap bg-[#0078d7] tracking-[-0.45px] text-[#3f6288]">Show Name</span></span><svg class="ml-[9px] h-[6px] w-[11px]" viewBox="0 0 11 6" fill="none" stroke="#bbb" stroke-width="1.200"><path d="M.5.500l5 5 5-5"/></svg></span></template>

<svg class="hidden">
  <symbol id="minus" viewBox="0 0 12 12"><rect x=".5" y=".5" width="10.500" height="10.500" rx="1" fill="#fafafa" stroke="#8e8e8e"/><path d="M3 6h6" stroke="#3a5a9c"/></symbol>
  <symbol id="plus" viewBox="0 0 12 12"><rect x=".5" y=".5" width="10.500" height="10.500" rx="1" fill="#fafafa" stroke="#8e8e8e"/><path d="M3 6h6M6 3v6" stroke="#3a5a9c"/></symbol>
  <symbol id="check" viewBox="0 0 15 15"><rect x="1" y="1" width="12.500" height="12.500" fill="#fff" stroke="#222" stroke-width="1.500"/><path d="M4 7l2.500 3L11 4.500" fill="none" stroke="#000" stroke-width="2"/></symbol>
  <symbol id="pinx" viewBox="0 0 36 16"><path d="M5.500 3h6M6.500 3v6M10.500 3v6M9.500 3v6M4 9h9M8.500 9v5" stroke="#000" stroke-width="1.400"/><path d="M23 4l8 8M31 4l-8 8" stroke="#000" stroke-width="1.700"/></symbol>
  <symbol id="chev" viewBox="0 0 9 6"><path d="M1 1l3.500 3.500L8 1" fill="none" stroke="#333" stroke-width="1.400"/></symbol>
  <symbol id="launch" viewBox="0 0 10 10"><path d="M1 9V1h8M4 4l5 5M9 5v4H5" fill="none" stroke="#333" stroke-width="1.200"/></symbol>
  <symbol id="catalog" viewBox="0 0 20 20"><path d="M1 2h17v13H1z" fill="#fff" stroke="#555"/><path d="M1 2h17v3H1z" fill="#2f5fa8"/><path d="M9 9l3-3h5v9l-3 3H9z" fill="#e2bb1c" stroke="#86690a"/><path d="M9 9h5v9M14 9l3-3" fill="none" stroke="#86690a"/><path d="M3 15l3-3h4v4l-3 2H3z" fill="#c9c21c" stroke="#5f6d10"/></symbol>
  <symbol id="search" viewBox="0 0 20 20"><path d="M1 2h17v13H1z" fill="#eee" stroke="#555"/><path d="M1 2h17v3H1z" fill="#2f5fa8"/><path d="M3 7.500h13" stroke="#8ab" stroke-width="2"/><circle cx="11" cy="14" r="4.500" fill="#2c7fc4" stroke="#ddd"/><path d="M11 10c3 1 4 4 2 7-2-1-3-5-2-7z" fill="#6dbf4a"/></symbol>
</svg>

<script>
// toolbar glyphs, drawn on a 20x20 grid
const win = '<path d="M1 2h18v15H1z" fill="#fff" stroke="#555"/><path d="M1 2h18v3H1z" fill="#2f5fa8"/>';
const cursor = (f, s) => `<path d="M5 1v15l4-4 2.500 6 2.500-1-2.500-6h5z" fill="${f}" stroke="${s}"/>`;
const small = (x, f, s) => `<path d="M${x} 3l10 9H${x + 5}l-5 5z" fill="${f}" stroke="${s}" stroke-width="1.300"/>`;
const sheet = c => `<path d="M4 1h8l4 4v14H4z" fill="#fff" stroke="${c}" stroke-width="1.300"/>`;
const fold = c => `<path d="M4 3c3 3-2 9 0 14M10 3c-4 5 3 8 0 14M16 3c2 5-3 9 0 14M3 4h14M3 16h14" fill="none" stroke="${c}" stroke-width="1.200"/><path d="M2 2h3v3H2zM15 2h3v3h-3zM2 15h3v3H2zM15 15h3v3h-3zM8 2h3v3H8zM8 15h3v3H8z" fill="${c}"/>`;
const lens = s => `<path d="M12 12l6 6" stroke="#9c5f55" stroke-width="3"/><circle cx="8" cy="8" r="6" fill="#f4f6f8" stroke="#666" stroke-width="1.400"/><path d="${s}" stroke="#222" stroke-width="2"/>`;
const diamond = '<path d="M10 8l9 5-9 6-9-6z" fill="#e9b758" stroke="#b98428"/>';
const err = y => `<circle cx="14" cy="${y}" r="5" fill="#d32020" stroke="#f6b0b0"/><path d="M12 ${y - 2}l4 4M16 ${y - 2}l-4 4" stroke="#fff" stroke-width="1.600"/>`;
const icons = {
  new: sheet('#566') + '<path d="M12 1v4h4" fill="#cde" stroke="#566"/>',
  open: '<path d="M1 6h6l2 2h7v10H1z" fill="#d9a73e" stroke="#8f6a1d"/><path d="M4 11h15l-4 7H1z" fill="#f6d98a" stroke="#8f6a1d"/><path d="M10 5c2-3 4-3 6-1" stroke="#2f6fb5" stroke-width="2" fill="none"/><path d="M18 1v6h-5z" fill="#2f6fb5"/>',
  save: '<path d="M2 2h16v16H2z" fill="#8a7424" stroke="#4b3f14"/><path d="M5 2h10v8H5z" fill="#f0eedd"/><path d="M6 12h8v6H6z" fill="#333"/><path d="M11 13h2v4h-2z" fill="#eee"/>',
  print: '<path d="M5 1h10v8H5z" fill="#fff" stroke="#555"/><path d="M1 8h18v7H1z" fill="#bbb" stroke="#444" stroke-width="1.300"/><path d="M5 12h10v6H5z" fill="#fff" stroke="#444"/><path d="M7 4h6M7 6h6" stroke="#888"/><circle cx="16" cy="10" r="1" fill="#d7c832"/>',
  cut: '<path d="M6 1l6 12M14 4L8 13" stroke="#aaa" stroke-width="2" fill="none"/><circle cx="6" cy="15" r="2.500" fill="none" stroke="#aaa" stroke-width="1.600"/><circle cx="14" cy="15" r="2.500" fill="none" stroke="#aaa" stroke-width="1.600"/>',
  copy: '<path d="M7 1h8l3 3v10H7zM2 5h8l3 3v11H2z" fill="#f2f2f2" stroke="#b4b4b4" stroke-width="1.300"/><path d="M4 10h6M4 13h6M4 16h6" stroke="#b4b4b4"/>',
  paste: '<path d="M2 3h14v14H2z" fill="#a87530" stroke="#6b4918"/><path d="M6 1h6v4H6z" fill="#ddd" stroke="#555"/><path d="M8 7h7l4 4v8H8z" fill="#fff" stroke="#456"/><path d="M10 12h6M10 15h6" stroke="#4a80c0"/>',
  del: '<path d="M5 5l10 11M15 5L5 16" stroke="#a4a4a4" stroke-width="3"/>',
  undo: '<path d="M5 7c7-5 12-1 11 4-1 3-3 5-5 6" fill="none" stroke="#1c5fa3" stroke-width="2.400"/><path d="M2 3v8h8z" fill="#1c5fa3"/>',
  redo: '<path d="M15 7C8 2 3 6 4 11c1 3 3 5 5 6" fill="none" stroke="#bdbdbd" stroke-width="2.400"/><path d="M18 3v8h-8z" fill="#bdbdbd"/>',
  add: '<path d="M10 6l9 6-9 7-9-7z" fill="#f0c878" stroke="#a8772e"/><path d="M10 0v12M4 6h12" stroke="#000" stroke-width="3"/>',
  edit: '<path d="M3 6v11h14M3 6l6 8" fill="none" stroke="#222" stroke-width="1"/><path d="M1.500 5h3v3h-3zM1.500 15.500h3v3h-3zM8.500 15.500h3v3h-3zM15.500 15.500h3v3h-3z" fill="#222"/><path d="M10 11L18 1" stroke="#d58a2c" stroke-width="2.600"/><path d="M9 12l2-1" stroke="#333" stroke-width="2"/>',
  toc: win + '<path d="M3 8h4M3 11h4M3 14h4" stroke="#d24" stroke-width="1.200"/><path d="M8 8h9M8 11h7M8 14h9" stroke="#37c" stroke-width="1.200"/>',
  toolbox: win + '<path d="M4 10l8-3 6 3v6l-8 3-6-3z" fill="#c8321f" stroke="#7a170c"/><path d="M4 10l6 3 8-3M10 13v6" fill="none" stroke="#f19a88"/>',
  python: win + '<path d="M3 7l3 2-3 2" fill="none" stroke="#222" stroke-width="1.500"/>',
  model: '<path d="M5 4v12M5 10h10" stroke="#234" fill="none"/><path d="M1 1h6v5H1zM1 14h6v5H1z" fill="#3f9ee8" stroke="#1b5c98"/><circle cx="9.500" cy="10" r="3" fill="#e7d33a" stroke="#89780c"/><path d="M14 7h5v6h-5z" fill="#63b94b" stroke="#2d701c"/>',
  arrowo: '<path d="M7 4l8 8h-4.500L7 16z" fill="#fff" stroke="#333" stroke-width="1.300"/>', arrowd: '<path d="M7 5l8 7h-4l-4 4z" fill="#222"/>',
  arrowp: small(1, '#fff', '#333') + '<path d="M14 1h3v3h3v3h-3v3h-3V7h-3V4h3z" fill="#fff" stroke="#333"/>',
  arrowm: small(1, '#fff', '#333') + '<path d="M11 4h8.500v3H11z" fill="#fff" stroke="#333"/>',
  arrowa: '<path d="M1 2l8 7H5l-4 4z" fill="#bbb"/><path d="M10 18l3.500-9 3.500 9M11.500 15h4" fill="none" stroke="#bbb" stroke-width="1.600"/>',
  pencil: '<path d="M2 17h12" stroke="#222" stroke-width="2.200"/><path d="M6 15L16 2" stroke="#dba63c" stroke-width="3"/><path d="M14 5l3-4" stroke="#c25b3a" stroke-width="3"/>',
  topoext: '<path d="M3 5h9v12H3z" fill="#c9efb8" stroke="#1a7a1a" stroke-width="1.500" stroke-dasharray="2 1"/><path d="M7 8h8v8H7z" fill="none" stroke="#1a7a1a" stroke-width="1.400"/><path d="M1 3h4v4H1zM11 3h4v4h-4z" fill="#1a8a1a"/><path d="M1 15h4v4H1zM12 15h4v4h-4z" fill="#d11"/><path d="M19 1v5l-5-5z" fill="#27c"/>',
  sketch: '<path d="M5 6h11v11H5zM3 12L13 1" fill="none" stroke="#b9b9b9" stroke-width="1.400"/><path d="M3 15h4v4H3zM14 15h4v4h-4zM14 4h4v4h-4z" fill="#b9b9b9"/>',
  topo: '<path d="M1 1h18v18H1z" fill="#fff" stroke="#56799a" stroke-width="1.400"/><path d="M5 15l5-9 5 9" fill="none" stroke="#168a16" stroke-width="1.600"/><path d="M8 4h4v4H8zM3 13h4v4H3z" fill="#168a16"/><path d="M13 13h4v4h-4z" fill="#d11"/>',
  linebox: '<path d="M1 1h18v18H1z" fill="none" stroke="#bbb" stroke-dasharray="2 1"/><path d="M6 15l8-9" stroke="#bbb" stroke-width="2"/><path d="M4 13h4v4H4zM12 4h4v4h-4z" fill="#bbb"/>',
  zoomin: lens('M8 5v6M5 8h6'), zoomout: lens('M5 8h6'),
  pan: '<path d="M4 11l-3-3c1-2 3 0 5 1L5 3c2-1 2 1 3 4V1c2-1 2 2 2 6l2-5c2 0 1 3 1 6l3-4c2 0 0 4-1 7s-2 5-3 8H7c0-3-2-4-3-8z" fill="#fff" stroke="#555"/>',
  globe: '<circle cx="10" cy="10" r="8.500" fill="#3a76b8" stroke="#456"/><path d="M7 3c4-1 5 2 3 4s-4 1-4 4-3 0-3-3 2-4 4-5zM12 9c4-1 5 2 3 5s-4 3-4 0-1-4 1-5z" fill="#8cbf4f"/>',
  fixin: '<path d="M8 8V3L3 8zM12 8V3l5 5zM8 12v5l-5-5zM12 12v5l5-5z" fill="#111"/><path d="M1.500 1.500L6 6M18.500 1.500L14 6M1.500 18.500L6 14M18.500 18.500L14 14" stroke="#111" stroke-width="1.800"/>',
  fixout: '<path d="M1 1h6L1 7zM19 1v6l-6-6zM1 19v-6l6 6zM19 19h-6l6-6z" fill="#111"/><path d="M3 3l4.500 4.500M17 3l-4.500 4.500M3 17l4.500-4.500M17 17l-4.500-4.500" stroke="#111" stroke-width="1.800"/>',
  back: '<path d="M1 10l8-7v4h9v6H9v4z" fill="#2767c0"/>', fwd: '<path d="M19 10l-8-7v4H2v6h9v4z" fill="#b9b9b9"/>',
  selfeat: '<path d="M4 2h14v13H4z" fill="#fff" stroke="#444"/><path d="M4 2h9l-3 13H4z" fill="#3cc9ea"/><path d="M11 7l6-4" stroke="#444"/><path d="M2 3v14l3-3 2 5 2-1-2-5h4z" fill="#fff" stroke="#222"/>',
  clear: '<path d="M3 2h13v13H3zM5 2l5 7 5-6M10 9v6" fill="none" stroke="#b9b9b9" stroke-width="1.400"/>',
  arrow: cursor('#1c1c1c', '#1c1c1c'),
  info: '<circle cx="10" cy="10" r="9" fill="#1f5fc0" stroke="#143f86"/><path d="M8 8.500h3v6M7.500 15h6" stroke="#fff" stroke-width="1.800" fill="none"/><circle cx="10" cy="5" r="1.500" fill="#fff"/>',
  bolt: '<path d="M12 1L4 11h4l-3 8 10-11h-4l5-7z" fill="#d5d5d5" stroke="#b5b5b5"/>',
  popup: '<path d="M3 2h16v12h-9l-6 5 2-5H3z" fill="#fff" stroke="#555" stroke-width="1.300"/><path d="M6 5h4v3H6zM12 6h5M6 10h10" stroke="#2a6fc0" stroke-width="1.400" fill="none"/>',
  measure: '<path d="M1 12h18v6H1z" fill="#c98f44" stroke="#7c5420"/><path d="M4 12v3M7 12v3M10 12v3M13 12v3M16 12v3" stroke="#fff"/><path d="M3 5h5M12 5h5" stroke="#1a5fae" stroke-width="2"/><path d="M0 5l4-4v8zM20 5l-4-4v8z" fill="#1a5fae"/>',
  binoc: '<path d="M4 2h4l1 5h2l1-5h4l3 13v4h-7v-7H8v7H1v-4z" fill="#333"/><path d="M4 9l-1 6M15 9l1 6" stroke="#ccc"/>',
  route: '<path d="M8 10h11v8H8z" fill="#e6f0fa" stroke="#4a80b5"/><path d="M3 15V8h6V4h6" fill="none" stroke="#2a6fae" stroke-width="1.600"/><path d="M19 4l-5-3v6z" fill="#2a6fae"/><circle cx="3" cy="16" r="2.300" fill="#fff" stroke="#2a6fae" stroke-width="1.300"/><path d="M1 6h4v4H1z" fill="#fff" stroke="#2a6fae"/><path d="M11 14h6" stroke="#2a6fae"/>',
  xy: '<circle cx="10" cy="4.500" r="3.800" fill="#fff" stroke="#1a5fae" stroke-width="1.800"/><circle cx="10" cy="4.500" r="1.200" fill="#1a5fae"/><path d="M3 11l5 8M8 11l-5 8M11 11l3 4 3-4M14 15v4" fill="none" stroke="#1a5fae" stroke-width="1.900"/>',
  time: '<path d="M1 2h18v12H1z" fill="#eee" stroke="#bbb"/><path d="M1 2h18v3H1z" fill="#bbb"/><circle cx="10" cy="13" r="5.500" fill="#eee" stroke="#aaa" stroke-width="1.500"/><path d="M10 10v3h3" fill="none" stroke="#aaa"/>',
  seg: '<path d="M3 17L16 4" stroke="#bbb" stroke-width="1.300"/><path d="M1 15h4v4H1zM14 2h4v4h-4z" fill="#aaa"/>',
  arc: '<path d="M4 17C3 9 8 4 16 4" fill="none" stroke="#bbb" stroke-width="1.300"/><path d="M2 15h4v4H2zM14 2h4v4h-4zM6 7h3v3H6z" fill="#aaa"/>',
  trace: '<path d="M5 4h11l-3 10H2z" fill="none" stroke="#bbb" stroke-width="1.500"/><path d="M4 2h4v4H4zM14 2h4v4h-4z" fill="#aaa"/><path d="M10 10v9M6 14h9" stroke="#aaa" stroke-width="1.500"/>',
  point: '<path d="M8 8h4v4H8z" fill="#999"/><path d="M10 1v5M10 14v5M1 10h5M14 10h5M3 3l4 4M17 3l-4 4M3 17l4-4M17 17l-4-4" stroke="#bbb" stroke-width="1.500" stroke-dasharray="2 1"/>',
  e1: '<path d="M3 3v14h14z" fill="#e2f1d2" stroke="#4a7a2a" stroke-width="1.400"/><path d="M3 3h14v14" fill="none" stroke="#777" stroke-dasharray="1 1"/><path d="M1 1h4v4H1zM1 15h4v4H1z" fill="#168a16"/><path d="M15 15h4v4h-4z" fill="#168a16"/><path d="M15 10h4v4h-4z" fill="#d11"/>',
  e2: '<path d="M3 3v14h6V7z" fill="#e2f1d2" stroke="#4a7a2a" stroke-width="1.300"/><path d="M10 1v18" stroke="#222" stroke-width="1.200"/><path d="M1 1h4v4H1zM1 15h4v4H1z" fill="#168a16"/><path d="M13 10h5v7h-5" fill="none" stroke="#777" stroke-dasharray="1 1"/>',
  e3: '<path d="M1 6h18v8H1z" fill="#c8dc96" stroke="#6b7f3a"/><path d="M10 1v18" stroke="#333" stroke-width="1.800"/><path d="M8 1h4v3H8zM8 16h4v3H8z" fill="#333"/>',
  split: '<path d="M2 18L17 2M4 5l12 11" stroke="#bbb" stroke-width="1.400"/><path d="M8 8h4v4H8z" fill="#bbb"/>',
  rotate: '<path d="M4 9a6 6 0 1 1 10 4" fill="none" stroke="#8cc7ea" stroke-width="3.500"/><path d="M4 9a6 6 0 1 1 10 4" fill="none" stroke="#1f6fb0" stroke-width="1"/><path d="M9 13h8l-4 5z" fill="#1f6fb0"/><circle cx="9" cy="9" r="1.300" fill="#222"/>',
  attr: '<path d="M1 2h18v16H1z" fill="#fff" stroke="#456f9c" stroke-width="1.500"/><path d="M4 5h5M4 8h5M4 11h5M4 14h5M11 5h5M11 8h5M11 11h5M11 14h5" stroke="#7da8d4" stroke-width="1.500"/>',
  rot: '<path d="M4 15A8 8 0 1 1 16 15" fill="none" stroke="#bbb" stroke-width="1.600"/><path d="M16 18v-5l-4 2zM8.500 8.500h3v3h-3z" fill="#bbb"/>',
  zoomel: '<path d="M1 2h18v16H1z" fill="#ddd" stroke="#c4c4c4"/><circle cx="7" cy="9" r="5" fill="#f2f2f2" stroke="#aaa"/><path d="M7 6v6M4 9h6M11 13l5 5" stroke="#aaa" stroke-width="2"/><circle cx="15" cy="6" r="2" fill="#aaa"/>',
  rect: '<path d="M2.500 3h15v14h-15z" fill="#fff" stroke="#444" stroke-width="1.400"/>',
  letter: '<path d="M4 17L9.500 3l5.500 14" fill="none" stroke="#222" stroke-width="1.500"/><path d="M10 3l5 14" stroke="#222" stroke-width="3.400"/><path d="M6 12h7M2 17.500h5M12 17.500h6" stroke="#222" stroke-width="1.500"/>',
  nodes: '<path d="M3 4h14l-5 6 5 6H3z" fill="none" stroke="#bbb" stroke-width="1.400"/><path d="M5 2h3v4H5zM14 2h4v4h-4zM1 14h4v4H1zM14 14h4v4h-4z" fill="#bbb"/>',
  pagezoom: '<path d="M8 1h8l3 3v14H8z" fill="#eee" stroke="#bbb"/><circle cx="8" cy="10" r="6" fill="#eee" stroke="#aaa" stroke-width="1.500"/><path d="M8 7v6M5 10h6M12 15l3 4" stroke="#aaa" stroke-width="2"/>',
  tocdraw: '<path d="M5 7v10h5M5 10h5" fill="none" stroke="#5a84a8" stroke-width="1.200"/><circle cx="5" cy="4" r="3.300" fill="#f0c878" stroke="#c08a35"/><path d="M12 5l3.500 3.500L12 12 8.500 8.500zM12 12.500l3.500 3.500-3.500 3.500L8.500 16z" fill="#f0c878" stroke="#c08a35"/><path d="M17 9h3M17 16h3" stroke="#2a6fc0" stroke-width="1.600"/>',
  tocsrc: '<path d="M10 11l7 4-7 5-7-5z" fill="#e9b758"/><path d="M4 3v9c0 3 12 3 12 0V3z" fill="#8fa3ba" stroke="#5a6a7c"/><ellipse cx="10" cy="3.500" rx="6" ry="2.500" fill="#dfe8f2" stroke="#5a6a7c"/>',
  tocvis: '<path d="M10 7l9 6-9 6-9-6z" fill="#aaa" stroke="#777"/><path d="M10 1l9 6.500-9 6.500-9-6.500z" fill="#f1c46c" stroke="#b98428"/>',
  tocsel: diamond + '<path d="M4 1h12v12H4z" fill="#fff" stroke="#444"/><path d="M4 1h8l-3 12H4z" fill="#2fc3ea"/><path d="M12 1l-2 5 4 2" fill="none" stroke="#444"/>',
  tocopt: '<path d="M2 1h16v18H2z" fill="#fff" stroke="#68809c" stroke-width="1.400"/><circle cx="6" cy="5" r="1.400"/><circle cx="6" cy="14" r="1.400"/><path d="M9 5h7M5 9h11M9 14h7M9 17h7" stroke="#567" stroke-width="1.200"/>',
  ddp: '<path d="M1 1h10v12H1z" fill="#fff" stroke="#555"/><path d="M4 4h11v13H4z" fill="#fff" stroke="#555"/><path d="M6 7h7v8H6z" fill="#7fb069" stroke="#365"/><path d="M9 4l5-2 6 2-2 5-5 1z" fill="#d9b470" stroke="#7f5c22"/>',
  refresh: '<path d="M6 1h8l3 3v14H6z" fill="#e6e6e6" stroke="#bbb"/><path d="M2 11c0-5 7-6 9-2M13 12c0 6-8 6-10 3" fill="none" stroke="#aaa" stroke-width="2"/><path d="M12 5v5H8zM1 19v-5h4z" fill="#aaa"/>',
  grid: '<path d="M1 1h18v18H1zM1 5h18M7 1v18M13 1v18M1 9h18M1 13h18" fill="none" stroke="#bbb" stroke-width="1.300"/>',
  first: '<path d="M4 2v16" stroke="#b5b5b5" stroke-width="2.500"/><path d="M17 2v16L7 10z" fill="#b5b5b5"/>',
  prev: '<path d="M14 2v16L5 10z" fill="#b5b5b5"/>', next: '<path d="M5 2v16l10-8z" fill="#b5b5b5"/>',
  last: '<path d="M17 2v16" stroke="#b5b5b5" stroke-width="2.500"/><path d="M3 2v16l11-8z" fill="#b5b5b5"/>',
  geo: '<path d="M1 9l7-6h6l5 7-9 9z" fill="#6fae2f" stroke="#3d6e16"/><path d="M4 9c3-2 5 2 8 0M6 12c3-2 5 2 8 0" stroke="#cdec7c" fill="none" stroke-width="1.400"/><path d="M15 1l1 3 3 1-3 1-1 3-1-3-3-1 3-1z" fill="#ffe94a"/>',
  valid: '<path d="M1 8l9-7 9 6v10l-9 2-9-3z" fill="#e0ab4e" stroke="#a87c2a"/><path d="M9 9h10v10H9z" fill="#fff" stroke="#222" stroke-width="1.500"/><path d="M9 12l5 2 4-4M14 14v5" stroke="#222" fill="none"/>',
  seltopo: fold('#333') + '<path d="M9 6v13l3-3h6z" fill="#111" stroke="#f4f4f4" stroke-width=".8"/>',
  n1: fold('#bbb'), n2: fold('#bbb') + '<path d="M12 15l8-12" stroke="#ccc" stroke-width="2"/>',
  align: '<path d="M1 8h4v9H1z" fill="#d9e5a8" stroke="#8c9c4a"/><path d="M14 2h5v16h-5z" fill="#f0e3a0"/><path d="M14 1v18" stroke="#c33" stroke-width="1.800"/><path d="M6 10h5" stroke="#27b" stroke-width="1.600"/><path d="M14 10l-4-3v6z" fill="#27b"/>',
  n3: '<path d="M2 1v17h16M6 1v12h13" fill="none" stroke="#c4c4c4" stroke-width="1.500" stroke-dasharray="3 1"/>',
  fix: fold('#222') + '<path d="M4 9h4l6-4M8 9l4 4" fill="none" stroke="#d11" stroke-width="1.800"/><path d="M2 7.500h4v4H2zM7 8h4v4H7z" fill="#d11"/>',
  val1: '<path d="M3 3l12-1-1 8-4 6-7-3zM3 8l7-2 5 4M6 3l3 12" fill="none" stroke="#222" stroke-width="1.300"/><path d="M8 13l4 4 7-9" fill="none" stroke="#111" stroke-width="2.200"/>',
  val2: '<path d="M1 2h13v10H1z" fill="#cfe2f5" stroke="#222" stroke-width="1.500"/><path d="M3 4l4 4 5-3M7 8v4" stroke="#1a5fae" fill="none" stroke-width="1.300"/><path d="M8 14l4 4 7-9" fill="none" stroke="#111" stroke-width="2.200"/>',
  errsel: '<path d="M3 5v12l3-3 2 5 2-1-2-5h4z" fill="#fff" stroke="#222"/>' + err(6),
  errwin: win + '<path d="M3 8h5M3 11h5M3 14h5" stroke="#567"/><path d="M9 6v11" stroke="#567"/>' + err(13),
};
const ICON = (n, active) => `<span class="${active ? 'flex h-[28px] w-[28px] shrink-0 items-center justify-center border border-[#0f7bd8] bg-[#dcebf8]' : 'flex w-[27.5px] shrink-0 justify-center'}"><svg class="size-[20px]" viewBox="0 0 20 20">${n === 'catalog' || n === 'search' ? `<use href="#${n}"/>` : icons[n]}</svg></span>`;
const letters = { B: 'font-bold', I: 'italic font-bold', U: 'underline font-bold' };
document.querySelectorAll('[data-tools]').forEach(bar => {
  bar.innerHTML = bar.dataset.tools.split(' ').map(t => {
    if (t === ':') return '<svg class="h-[20px] w-[9px] shrink-0" viewBox="0 0 9 20" fill="#aaa"><path d="M3.500 1h2v2h-2zM3.500 5h2v2h-2zM3.500 9h2v2h-2zM3.500 13h2v2h-2zM3.500 17h2v2h-2z"/></svg>';
    if (t === '|') return '<i class="mx-[3px] h-[18px] w-px shrink-0 bg-[#bdbdbd]"></i>';
    if (t === 'v') return '<span class="flex w-[14px] shrink-0 justify-center"><svg class="h-[4px] w-[7px]" viewBox="0 0 7 4"><path d="M0 0h7L3.500 4z"/></svg></span>';
    if (t === '~') return '<span class="grow"></span>';
    if (t === 'o' || t === 'O') return `<span class="flex h-full w-[13px] shrink-0 flex-col items-center bg-gradient-to-b from-[#f0f0f0] to-[#a8a8a8]"><svg class="h-full w-[13px]" viewBox="0 0 13 32">${t === 'O' ? '<path d="M2 6l3.500 2L2 10zM7 6l3.500 2L7 10z"/>' : ''}<path d="M3 20.500h7" stroke="#000" stroke-width="1.300"/><path d="M3 23.500h7l-3.500 4z"/></svg></span>`;
    if (t[0] === '#') return document.getElementById(t.slice(1)).innerHTML;
    if (t[0] === '_') return `<span class="shrink-0" style="margin-left:${t.slice(1)}px"></span>`;
    if (t.startsWith('t:')) { const [, s, w] = t.split(':'); return `<span class="shrink-0 whitespace-nowrap" style="width:${w}px">${s.replace('_', ' ')}</span>`; }
    if (t.startsWith('b:')) return `<span class="w-[27.5px] shrink-0 text-center font-['Liberation_Serif'] text-[17px] ${letters[t[2]]}">${t[2]}</span>`;
    return t[0] === '*' ? ICON(t.slice(1), true) : ICON(t);
  }).join('');
});

// error inspector grid
const widths = [189, 188, 188, 125, 93, 93, 126];
const errors = [['Must Not Overlap', 'Admin_Kecamatan', '', 'Polygon', '15', '20', 'False'], ['Must Not Overlap', 'Admin_Kecamatan', '', 'Polygon', '15', '20', 'False'], [], [], [], []];
document.getElementById('rows').innerHTML = errors.map((r, i) =>
  `<div class="flex h-[23.7px] border-b border-[#eeeeee]">` + widths.map((w, c) =>
    `<span class="flex shrink-0 items-center border-r border-[#e6e6e6] pt-[2px] ${c ? 'pl-[7px]' : 'pl-[8px]'} ${i === 0 ? (c ? 'bg-[#0078d7] text-white' : 'bg-[linear-gradient(90deg,white_6px,#0078d7_6px)] text-white') : ''}" style="width:${w}px">${r[c] || ''}</span>`).join('') + '</div>').join('');

// document list
document.getElementById('list').innerHTML = Array.from({ length: 10 }, (_, i) => `<p class="h-[24.1px] pt-[3px]">${i + 11}. A</p>`).join('');

// rulers: one centimetre is 33 px
let h = '<rect x="1386" y="349" width="423" height="18" fill="#fff"/><path d="M1315.500 345v28" stroke="#ccc"/><path d="M1297.500 357v7h6" fill="none" stroke="#555" stroke-width="3"/>';
for (let k = -8; k <= 63; k++) {
  const x = 1386 + k * 8.25;
  if (k > 0 && k % 4 === 0 && k <= 48) h += `<text x="${x}" y="363.500" text-anchor="middle" font-size="12" fill="#555">${k / 4}</text>`;
  else if (k % 2 === 0 && k !== 0) h += `<path d="M${x} 355v8" stroke="#555"/>`;
  else if (k) h += `<path d="M${x} 358v2" stroke="#555" stroke-width="1.500"/>`;
}
h += '<path d="M1375 353h9v11h-9zM1811 353h9v11h-9z" fill="#777"/><path d="M1406.500 347.500h13v3l-6.500 7-6.500-7zM1406.500 368v-3l6.500-7 6.500 7v3zM1406.500 368.500h13v5h-13zM1804.500 368v-3l6.500-7 6.500 7v3z" fill="#fff" stroke="#777"/>';
document.getElementById('hruler').innerHTML = h;
let v = '<rect x="1290" y="600" width="19" height="392" fill="#fdfdfd"/>';
for (let k = -16; k <= 47; k++) {
  const y = 600 + k * 8.25;
  if (k > 0 && k % 4 === 0) v += `<text transform="translate(1305 ${y}) rotate(-90)" text-anchor="middle" font-size="12" fill="#555">${k / 4}</text>`;
  else if (k % 2 === 0) v += `<path d="M1298 ${y}h6" stroke="#555"/>`;
  else v += `<path d="M1300 ${y}h2" stroke="#555" stroke-width="1.500"/>`;
}
document.getElementById('vruler').innerHTML = v;
</script>
</body>
</html>
